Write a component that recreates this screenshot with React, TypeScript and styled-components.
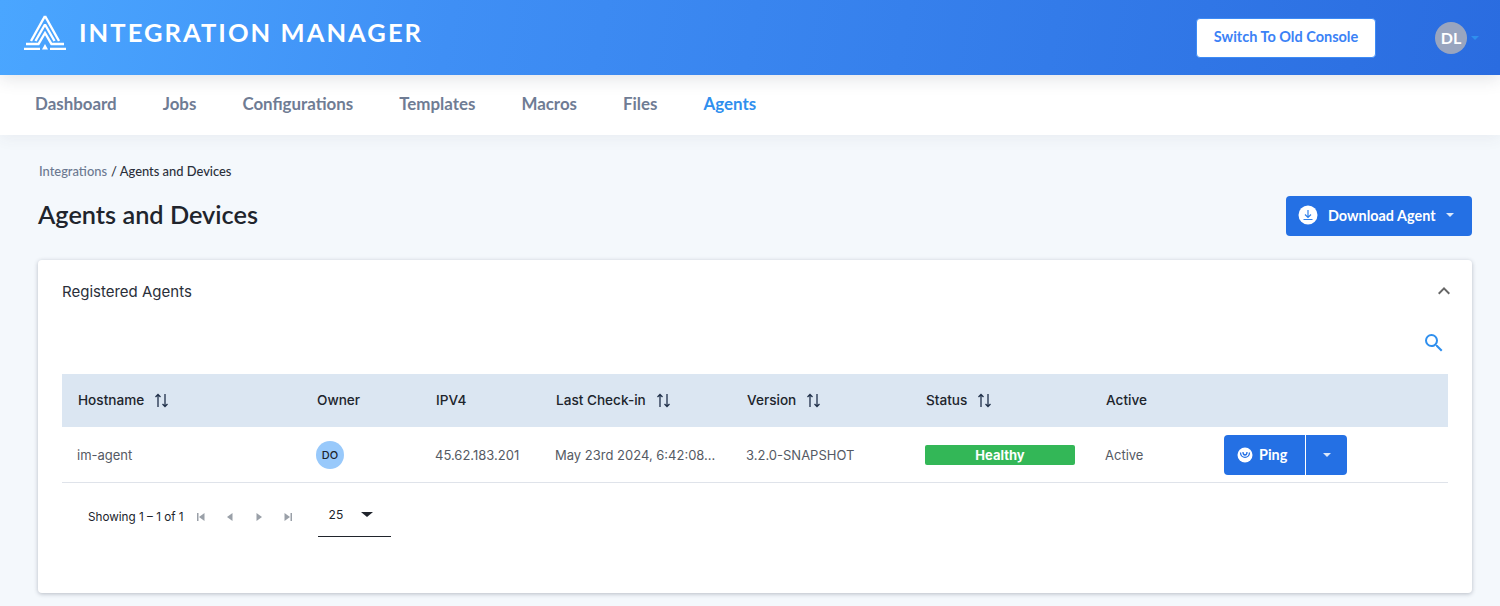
import { MdExpandLess, MdSearch } from 'react-icons/md';
import styled, { createGlobalStyle } from 'styled-components';

const GlobalStyle = createGlobalStyle`
  html, body {
    margin: 0;
    background: #f4f8fc;
    font-family: 'Lato', 'Liberation Sans', sans-serif;
  }
  * { box-sizing: border-box; }
`;

const Page = styled.div`
  width: 1500px;
  height: 606px;
  overflow: hidden;
  background: #f4f8fc;
`;

const Header = styled.header`
  position: relative;
  z-index: 1;
  height: 75px;
  display: flex;
  align-items: center;
  padding: 0 21px 0 24px;
  background: linear-gradient(100deg, #4aa6ff 0%, #3f8ff5 30%, #2a6ce0 100%);
  box-shadow: 0 4px 16px rgba(40, 50, 70, 0.13);
`;

const Brand = styled.div`
  display: flex;
  align-items: center;
  gap: 13px;
  margin-top: -12px;
  flex: 1;
`;

const BrandName = styled.span`
  font-family: 'Lato', sans-serif;
  font-weight: 700;
  font-size: 25.5px;
  letter-spacing: 2.05px;
  color: #fff;
`;

const SwitchButton = styled.button`
  width: 180px;
  height: 40px;
  margin-right: 59px;
  padding: 0 0 2px;
  border: 1px solid #3d8bf5;
  border-radius: 4px;
  background: #fff;
  color: #3b82f6;
  font: 700 14.5px 'Lato', sans-serif;
`;

const Avatar = styled.div`
  width: 32px;
  height: 32px;
  border-radius: 50%;
  background: #99a5bf;
  color: #fff;
  font: 700 16px/32px 'Lato', sans-serif;
  text-align: center;
`;

const Caret = styled.span<{ $color: string }>`
  display: inline-block;
  width: 0;
  height: 0;
  border-left: 4px solid transparent;
  border-right: 4px solid transparent;
  border-top: 4px solid ${(props): string => props.$color};
`;

const UserCaret = styled(Caret)`
  margin-left: 4px;
`;

const Nav = styled.nav`
  position: relative;
  height: 60px;
  display: flex;
  align-items: center;
  gap: 46px;
  padding: 0 35px 3px;
  background: #fff;
  box-shadow: 0 4px 14px rgba(60, 70, 90, 0.06);
`;

const NavItem = styled.a<{ $active?: boolean }>`
  font-size: 16.9px;
  font-weight: 700;
  color: ${(props): string => (props.$active ? '#2f8fee' : '#6f7c94')};
`;

const Content = styled.main`
  padding: 28px 28px 0 38px;
`;

const Breadcrumb = styled.div`
  padding-left: 1px;
  font-size: 12.9px;
  line-height: 16px;
  color: #2a2f3a;
  font-weight: 500;
`;

const Crumb = styled.span`
  color: #6b7890;
  margin-right: 4px;
`;

const TitleRow = styled.div`
  display: flex;
  align-items: center;
  justify-content: space-between;
  margin-top: 17px;
  height: 40px;
`;

const Title = styled.h1`
  margin: -5px 0 0;
  font-size: 25.3px;
  font-weight: 600;
  color: #20242c;
`;

const PrimaryButton = styled.button`
  height: 40px;
  display: flex;
  align-items: center;
  background: #2470e4;
  border: none;
  border-radius: 4px;
  color: #fff;
  font: 700 14.4px 'Lato', sans-serif;
`;

const DownloadButton = styled(PrimaryButton)`
  width: 186px;
  padding: 0 0 2px 12px;
  gap: 10px;
`;

const Card = styled.section`
  height: 333px;
  margin-top: 24px;
  padding: 0 24px;
  background: #fff;
  border-radius: 4px;
  box-shadow: 0 1px 4px rgba(40, 50, 70, 0.3);
`;

const CardHead = styled.div`
  height: 62px;
  display: flex;
  align-items: center;
  justify-content: space-between;
  font-family: 'Inter', sans-serif;
  font-size: 15px;
  color: #2a2f3a;
`;

const Collapse = styled(MdExpandLess)`
  margin-right: -8px;
  color: #666;
`;

const SearchRow = styled.div`
  height: 52px;
  display: flex;
  justify-content: flex-end;
  align-items: center;
  padding: 0 2px 11px 0;
  color: #2f8fee;
`;

const HeadRow = styled.div`
  display: grid;
  grid-template-columns: 239px 119px 120px 191px 179px 180px 118px 240px;
  height: 53px;
  align-items: center;
  background: #dbe6f2;
`;

const HeadCell = styled.div`
  padding: 0 0 2px 16px;
  display: flex;
  align-items: center;
  gap: 10px;
  font-family: 'Inter', sans-serif;
  font-size: 13.6px;
  font-weight: 500;
  color: #20242c;
`;

const BodyRow = styled(HeadRow)`
  height: 56px;
  background: #fff;
  border-bottom: 1px solid #dfe3ea;
`;

const BodyCell = styled.div`
  padding-left: 15px;
  font-family: 'Inter', sans-serif;
  font-size: 13px;
  color: #555a64;
  white-space: nowrap;
`;

const ActionCell = styled(BodyCell)`
  padding-left: 16px;
`;

const OwnerBadge = styled.div`
  width: 28px;
  height: 28px;
  border-radius: 50%;
  background: #98c9fb;
  color: #20242c;
  font-size: 11px;
  font-weight: 500;
  line-height: 28px;
  text-align: center;
`;

const StatusPill = styled.div`
  width: 150px;
  height: 20px;
  border-radius: 2px;
  background: #33b757;
  color: #fff;
  font-size: 13px;
  font-weight: 700;
  line-height: 20px;
  text-align: center;
`;

const SplitButton = styled.div`
  display: flex;
  width: 123px;
`;

const PingButton = styled(PrimaryButton)`
  width: 81px;
  padding-left: 13px;
  gap: 6px;
  border-radius: 4px 0 0 4px;
`;

const PingMenu = styled(PrimaryButton)`
  width: 42px;
  justify-content: center;
  border-left: 1px solid #fff;
  border-radius: 0 4px 4px 0;
`;

const Pager = styled.div`
  display: flex;
  align-items: center;
  padding: 0 0 0 26px;
  height: 68px;
  font-family: 'Inter', sans-serif;
  font-size: 11.7px;
  color: #20242c;
`;

const PagerIcons = styled.div`
  display: flex;
  align-items: center;
  gap: 19px;
  margin-left: 12px;
`;

const PageSize = styled.div`
  width: 73px;
  height: 40px;
  margin-left: 25px;
  padding: 0 11px 4px;
  display: flex;
  align-items: center;
  gap: 18px;
  font-size: 12px;
  border-bottom: 1px solid #20242c;
`;

const SizeCaret = styled(Caret)`
  border-left-width: 6px;
  border-right-width: 6px;
  border-top-width: 5px;
`;

const SortSvg = styled.svg`
  margin-top: 2px;
`;

const columns = ['Hostname', 'Owner', 'IPV4', 'Last Check-in', 'Version', 'Status', 'Active', ''];
const sortable = ['Hostname', 'Last Check-in', 'Version', 'Status'];
const navItems = ['Dashboard', 'Jobs', 'Configurations', 'Templates', 'Macros', 'Files', 'Agents'];

const Logo = (): JSX.Element => (
  <svg width="42" height="36" viewBox="0 0 42 36" fill="none" stroke="#fff" strokeWidth="2.4">
    <path d="M21 2 L35 27 M21 2 L7 27" />
    <path d="M21 10.5 L30.5 27 M21 10.5 L11.5 27" />
    <path d="M2 30 H14.5 L21 19 L27.5 30 H40" />
    <path d="M18 35.5 L21 30 L24 35.5 Z" fill="#fff" stroke="none" />
    <path d="M0 35 H16 M26 35 H42" />
  </svg>
);

const SortIcon = (): JSX.Element => (
  <SortSvg width="15" height="15" viewBox="0 0 15 15" fill="none" stroke="#20304a" strokeWidth="1.3">
    <path d="M4 14 V1.5 M1.5 4 L4 1.5 L6.5 4" />
    <path d="M11 1 V13.5 M8.5 11 L11 13.5 L13.5 11" />
  </SortSvg>
);

const DownloadIcon = (): JSX.Element => (
  <svg width="20" height="20" viewBox="0 0 20 20">
    <circle cx="10" cy="10" r="9.5" fill="#fff" />
    <path d="M10 5 V12 M7 9.5 L10 12.5 L13 9.5 M5.5 14.5 H14.5" fill="none" stroke="#2f80ea" strokeWidth="1.2" />
  </svg>
);

const PingIcon = (): JSX.Element => (
  <svg width="16" height="16" viewBox="0 0 16 16">
    <circle cx="8" cy="8" r="7.5" fill="#fff" />
    <path d="M3.5 5.5 C3.5 12 12.5 12 12.5 5.5 M6 5 C6 9 10 9 10 5" fill="none" stroke="#2470e4" strokeWidth="1.3" />
  </svg>
);

const PagerIcon = ({ d }: { d: string }): JSX.Element => (
  <svg width="10" height="10" viewBox="0 0 10 10" fill="#9aa0a8">
    <path d={d} />
  </svg>
);

const App = (): JSX.Element => (
  <Page>
    <GlobalStyle />
    <Header>
      <Brand>
        <Logo />
        <BrandName>INTEGRATION MANAGER</BrandName>
      </Brand>
      <SwitchButton>Switch To Old Console</SwitchButton>
      <Avatar>DL</Avatar>
      <UserCaret $color="#2f8fee" />
    </Header>
    <Nav>
      {navItems.map((item) => (
        <NavItem key={item} $active={item === 'Agents'}>
          {item}
        </NavItem>
      ))}
    </Nav>
    <Content>
      <Breadcrumb>
        <Crumb>Integrations</Crumb>/ Agents and Devices
      </Breadcrumb>
      <TitleRow>
        <Title>Agents and Devices</Title>
        <DownloadButton>
          <DownloadIcon />
          Download Agent
          <Caret $color="#dce8fa" />
        </DownloadButton>
      </TitleRow>
      <Card>
        <CardHead>
          Registered Agents
          <Collapse size={24} />
        </CardHead>
        <SearchRow>
          <MdSearch size={24} />
        </SearchRow>
        <HeadRow>
          {columns.map((column) => (
            <HeadCell key={column}>
              {column}
              {sortable.includes(column) && <SortIcon />}
            </HeadCell>
          ))}
        </HeadRow>
        <BodyRow>
          <BodyCell>im-agent</BodyCell>
          <BodyCell>
            <OwnerBadge>DO</OwnerBadge>
          </BodyCell>
          <BodyCell>45.62.183.201</BodyCell>
          <BodyCell>May 23rd 2024, 6:42:08...</BodyCell>
          <BodyCell>3.2.0-SNAPSHOT</BodyCell>
          <BodyCell>
            <StatusPill>Healthy</StatusPill>
          </BodyCell>
          <BodyCell>Active</BodyCell>
          <ActionCell>
            <SplitButton>
              <PingButton>
                <PingIcon />
                Ping
              </PingButton>
              <PingMenu>
                <Caret $color="#dce8fa" />
              </PingMenu>
            </SplitButton>
          </ActionCell>
        </BodyRow>
        <Pager>
          Showing 1 – 1 of 1
          <PagerIcons>
            <PagerIcon d="M1 1 H2.5 V9 H1 Z M8.5 1 V9 L3 5 Z" />
            <PagerIcon d="M7.5 1 V9 L2 5 Z" />
            <PagerIcon d="M2.5 1 V9 L8 5 Z" />
            <PagerIcon d="M1.5 1 V9 L7 5 Z M7.5 1 H9 V9 H7.5 Z" />
          </PagerIcons>
          <PageSize>
            25
            <SizeCaret $color="#20242c" />
          </PageSize>
        </Pager>
      </Card>
    </Content>
  </Page>
);

export default App;
